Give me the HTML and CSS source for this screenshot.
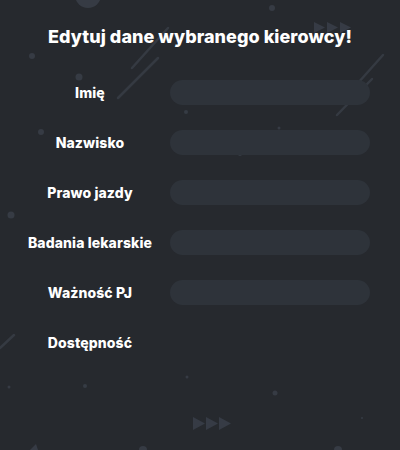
FILE: index.html
```html
<!DOCTYPE html>
<html lang="pl">
<head>
<meta charset="utf-8">
<title>Edytuj dane</title>
<link rel="stylesheet" href="styles.css">
</head>
<body>
<div class="scene">
  <svg class="particles" width="400" height="450" viewBox="0 0 400 450" aria-hidden="true">
    <g class="dot">
      <circle cx="88" cy="-5" r="13"/>
      <circle cx="272" cy="8" r="3"/>
      <circle cx="32" cy="56" r="3"/>
      <circle cx="79" cy="77" r="3.5"/>
      <circle cx="203" cy="100" r="4"/>
      <circle cx="186" cy="112" r="2"/>
      <circle cx="279" cy="128" r="1.5"/>
      <circle cx="240" cy="154" r="2"/>
      <circle cx="41" cy="132" r="3"/>
      <circle cx="11" cy="215" r="3.5"/>
      <circle cx="9" cy="387" r="1.5"/>
      <circle cx="85" cy="386" r="2"/>
      <circle cx="187" cy="377" r="1.5"/>
      <circle cx="275" cy="393" r="2.5"/>
      <circle cx="362" cy="418" r="1"/>
      <circle cx="143" cy="450" r="4"/>
      <circle cx="338" cy="450" r="4"/>
    </g>
    <g class="line">
      <line x1="132" y1="68" x2="168" y2="28"/>
      <line x1="118" y1="98" x2="158" y2="58"/>
      <line x1="358" y1="83" x2="383" y2="55"/>
      <line x1="337" y1="115" x2="372" y2="79"/>
      <line x1="0" y1="348" x2="14" y2="335"/>
    </g>
    <g class="tri">
      <polygon points="314,22 314,33 325,27.5"/>
      <polygon points="327,22 327,33 338,27.5"/>
      <polygon points="340,22 340,33 351,27.5"/>
      <polygon points="193,417 193,430 205,423.5"/>
      <polygon points="206,417 206,430 218,423.5"/>
      <polygon points="219,417 219,430 231,423.5"/>
      <polygon points="30,450 36,444 38,450"/>
    </g>
  </svg>

  <main class="page">
    <h1 class="title">Edytuj dane wybranego kierowcy!</h1>
    <form class="form">
      <div class="row"><label class="label">Imię</label><span class="field"></span></div>
      <div class="row"><label class="label">Nazwisko</label><span class="field"></span></div>
      <div class="row"><label class="label">Prawo jazdy</label><span class="field"></span></div>
      <div class="row"><label class="label">Badania lekarskie</label><span class="field"></span></div>
      <div class="row"><label class="label">Ważność PJ</label><span class="field"></span></div>
      <div class="row"><label class="label">Dostępność</label></div>
    </form>
  </main>
</div>
</body>
</html>
```

FILE: styles.css
```css
html, body {
  margin: 0;
  padding: 0;
}
body {
  background: #26292e;
  font-family: "Inter", "Open Sans", "DejaVu Sans", sans-serif;
  color: #ffffff;
}
.scene {
  position: relative;
  width: 400px;
  height: 450px;
  overflow: hidden;
}
.particles {
  position: absolute;
  left: 0;
  top: 0;
}
.dot circle { fill: #363b44; }
.line line { stroke: #353a42; stroke-width: 2.5; stroke-linecap: round; }
.tri polygon { fill: #363b45; }

.page {
  position: relative;
  padding-top: 25px;
}
.title {
  margin: 0 0 18px;
  font-size: 18px;
  line-height: 24px;
  font-weight: 800;
  letter-spacing: 0.05px;
  text-align: center;
}
.form {
  display: flex;
  flex-direction: column;
}
.row {
  height: 50px;
  display: grid;
  grid-template-columns: 160px 200px;
  align-items: center;
  padding-left: 10px;
}
.label {
  text-align: center;
  font-size: 14px;
  font-weight: 800;
  letter-spacing: 0.1px;
}
.field {
  display: block;
  height: 25px;
  border-radius: 13px;
  background: #2e333a;
}
```
